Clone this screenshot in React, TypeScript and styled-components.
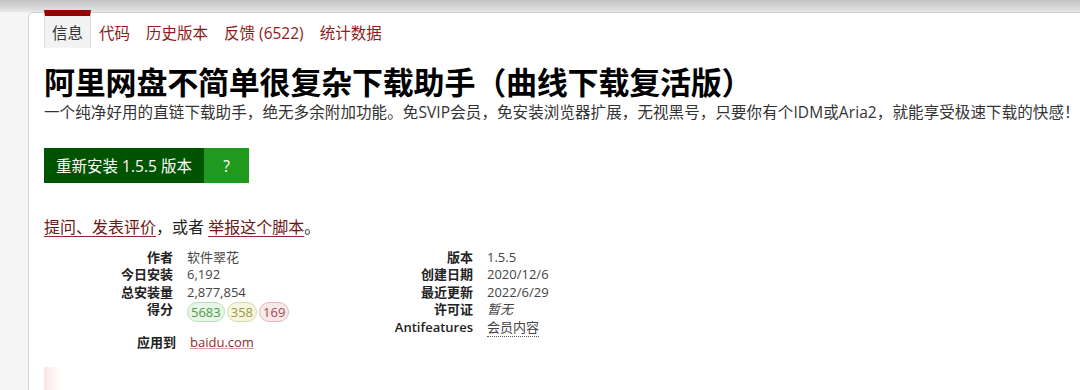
import styled, { createGlobalStyle } from 'styled-components';

const GlobalStyle = createGlobalStyle`
  html, body {
    margin: 0;
    padding: 0;
    background: #f5f5f5;
    font-family: "Open Sans", "Noto Sans CJK SC", sans-serif;
    color: #222;
    overflow: hidden;
  }
`;

const TopShade = styled.div`
  height: 12px;
  background: linear-gradient(to bottom, #c2c2c2, #e6e6e6);
`;

const Main = styled.div`
  padding-left: 28px;
`;

const Card = styled.section`
  background: #fff;
  border: 1px solid #d2d2d2;
  border-right: none;
  border-radius: 5px 0 0 0;
  padding: 0 0 0 15px;
  height: 400px;
`;

const Tabs = styled.nav`
  display: flex;
  align-items: stretch;
  height: 38px;
  margin-top: -3px;
  font-size: 15.5px;
`;

const Tab = styled.a<{ $active?: boolean }>`
  display: flex;
  align-items: center;
  padding: ${p => (p.$active ? '0 7px' : '0 8px')};
  color: ${p => (p.$active ? '#333' : '#8f1a1a')};
  text-decoration: none;
  background: ${p => (p.$active ? '#f2f2f2' : 'transparent')};
  border-top: ${p => (p.$active ? '6px solid #990000' : '6px solid transparent')};
  border-left: ${p => (p.$active ? '1px solid #ddd' : 'none')};
  border-right: ${p => (p.$active ? '1px solid #ddd' : 'none')};
`;

const Title = styled.h2`
  margin: 15px 0 0;
  font-size: 31px;
  line-height: 38px;
  font-weight: 700;
  color: #000;
  letter-spacing: -0.2px;
`;

const Description = styled.p`
  margin: 0;
  font-size: 15.5px;
  line-height: 22px;
  letter-spacing: 0.1px;
  color: #333;
  white-space: nowrap;
`;

const InstallRow = styled.div`
  display: flex;
  margin-top: 25px;
`;

const InstallButton = styled.a<{ $help?: boolean }>`
  display: flex;
  align-items: center;
  justify-content: center;
  height: 35px;
  width: ${p => (p.$help ? '45px' : '160px')};
  background: ${p => (p.$help ? '#1f9a1f' : '#005300')};
  color: #fff;
  font-size: 15.5px;
  text-decoration: none;
`;

const Feedback = styled.p`
  margin: 32px 0 0;
  font-size: 16px;
  line-height: 24px;
  color: #222;
`;

const TextLink = styled.a`
  color: #6e1515;
  text-decoration: underline;
  text-decoration-color: #8b2a2a;
  text-underline-offset: 3px;
`;

const InfoColumns = styled.div`
  display: flex;
  margin-top: 10px;
  font-size: 13px;
  line-height: 17.4px;
`;

const InfoList = styled.dl`
  display: grid;
  grid-template-columns: 129px auto;
  column-gap: 14px;
  align-content: start;
  width: 300px;
  margin: 0;
`;

const Label = styled.dt`
  text-align: right;
  font-weight: 600;
  color: #222;
`;

const Value = styled.dd<{ $italic?: boolean }>`
  margin: 0;
  color: #444;
  font-style: ${p => (p.$italic ? 'italic' : 'normal')};
`;

const Dotted = styled.span`
  border-bottom: 1px dotted #555;
`;

const Scores = styled.div`
  display: flex;
  gap: 2px;
  margin-top: 1px;
`;

const Score = styled.span<{ $tone: 'good' | 'ok' | 'bad' }>`
  padding: 0 3px;
  border-radius: 10px;
  line-height: 18px;
  border: 1px solid
    ${p => (p.$tone === 'good' ? '#bcdcbc' : p.$tone === 'ok' ? '#dcd8a8' : '#e2bcbc')};
  background: ${p => (p.$tone === 'good' ? '#e8f6e8' : p.$tone === 'ok' ? '#f6f6e0' : '#f8e8e8')};
  color: ${p => (p.$tone === 'good' ? '#4d9a4d' : p.$tone === 'ok' ? '#9a9a3a' : '#a04c4c')};
`;

const AppliesTo = styled(InfoList)`
  grid-template-columns: 132px auto;
  margin-top: -2px;
  font-size: 13px;
  line-height: 17px;
`;

const SiteLink = styled.a`
  color: #8b2e2e;
  text-decoration: underline;
  text-decoration-color: #d9a0a0;
`;

const FadedBlock = styled.div`
  margin-top: 16px;
  width: 18px;
  height: 30px;
  background: linear-gradient(to right, #fbe6e6, #fff);
`;

const App = () => {
  return (
    <>
      <GlobalStyle />
      <TopShade />
      <Main>
        <Card>
          <Tabs>
            <Tab $active>信息</Tab>
            <Tab>代码</Tab>
            <Tab>历史版本</Tab>
            <Tab>反馈 (6522)</Tab>
            <Tab>统计数据</Tab>
          </Tabs>

          <Title>阿里网盘不简单很复杂下载助手（曲线下载复活版）</Title>
          <Description>
            一个纯净好用的直链下载助手，绝无多余附加功能。免SVIP会员，免安装浏览器扩展，无视黑号，只要你有个IDM或Aria2，就能享受极速下载的快感！
          </Description>

          <InstallRow>
            <InstallButton>重新安装 1.5.5 版本</InstallButton>
            <InstallButton $help>?</InstallButton>
          </InstallRow>

          <Feedback>
            <TextLink>提问、发表评价</TextLink>，或者 <TextLink>举报这个脚本</TextLink>。
          </Feedback>

          <InfoColumns>
            <InfoList>
              <Label>作者</Label>
              <Value>软件翠花</Value>
              <Label>今日安装</Label>
              <Value>6,192</Value>
              <Label>总安装量</Label>
              <Value>2,877,854</Value>
              <Label>得分</Label>
              <Value>
                <Scores>
                  <Score $tone="good">5683</Score>
                  <Score $tone="ok">358</Score>
                  <Score $tone="bad">169</Score>
                </Scores>
              </Value>
            </InfoList>
            <InfoList>
              <Label>版本</Label>
              <Value>1.5.5</Value>
              <Label>创建日期</Label>
              <Value>2020/12/6</Value>
              <Label>最近更新</Label>
              <Value>2022/6/29</Value>
              <Label>许可证</Label>
              <Value $italic>暂无</Value>
              <Label>Antifeatures</Label>
              <Value>
                <Dotted>会员内容</Dotted>
              </Value>
            </InfoList>
          </InfoColumns>

          <AppliesTo>
            <Label>应用到</Label>
            <Value>
              <SiteLink>baidu.com</SiteLink>
            </Value>
          </AppliesTo>

          <FadedBlock />
        </Card>
      </Main>
    </>
  );
};

export default App;
